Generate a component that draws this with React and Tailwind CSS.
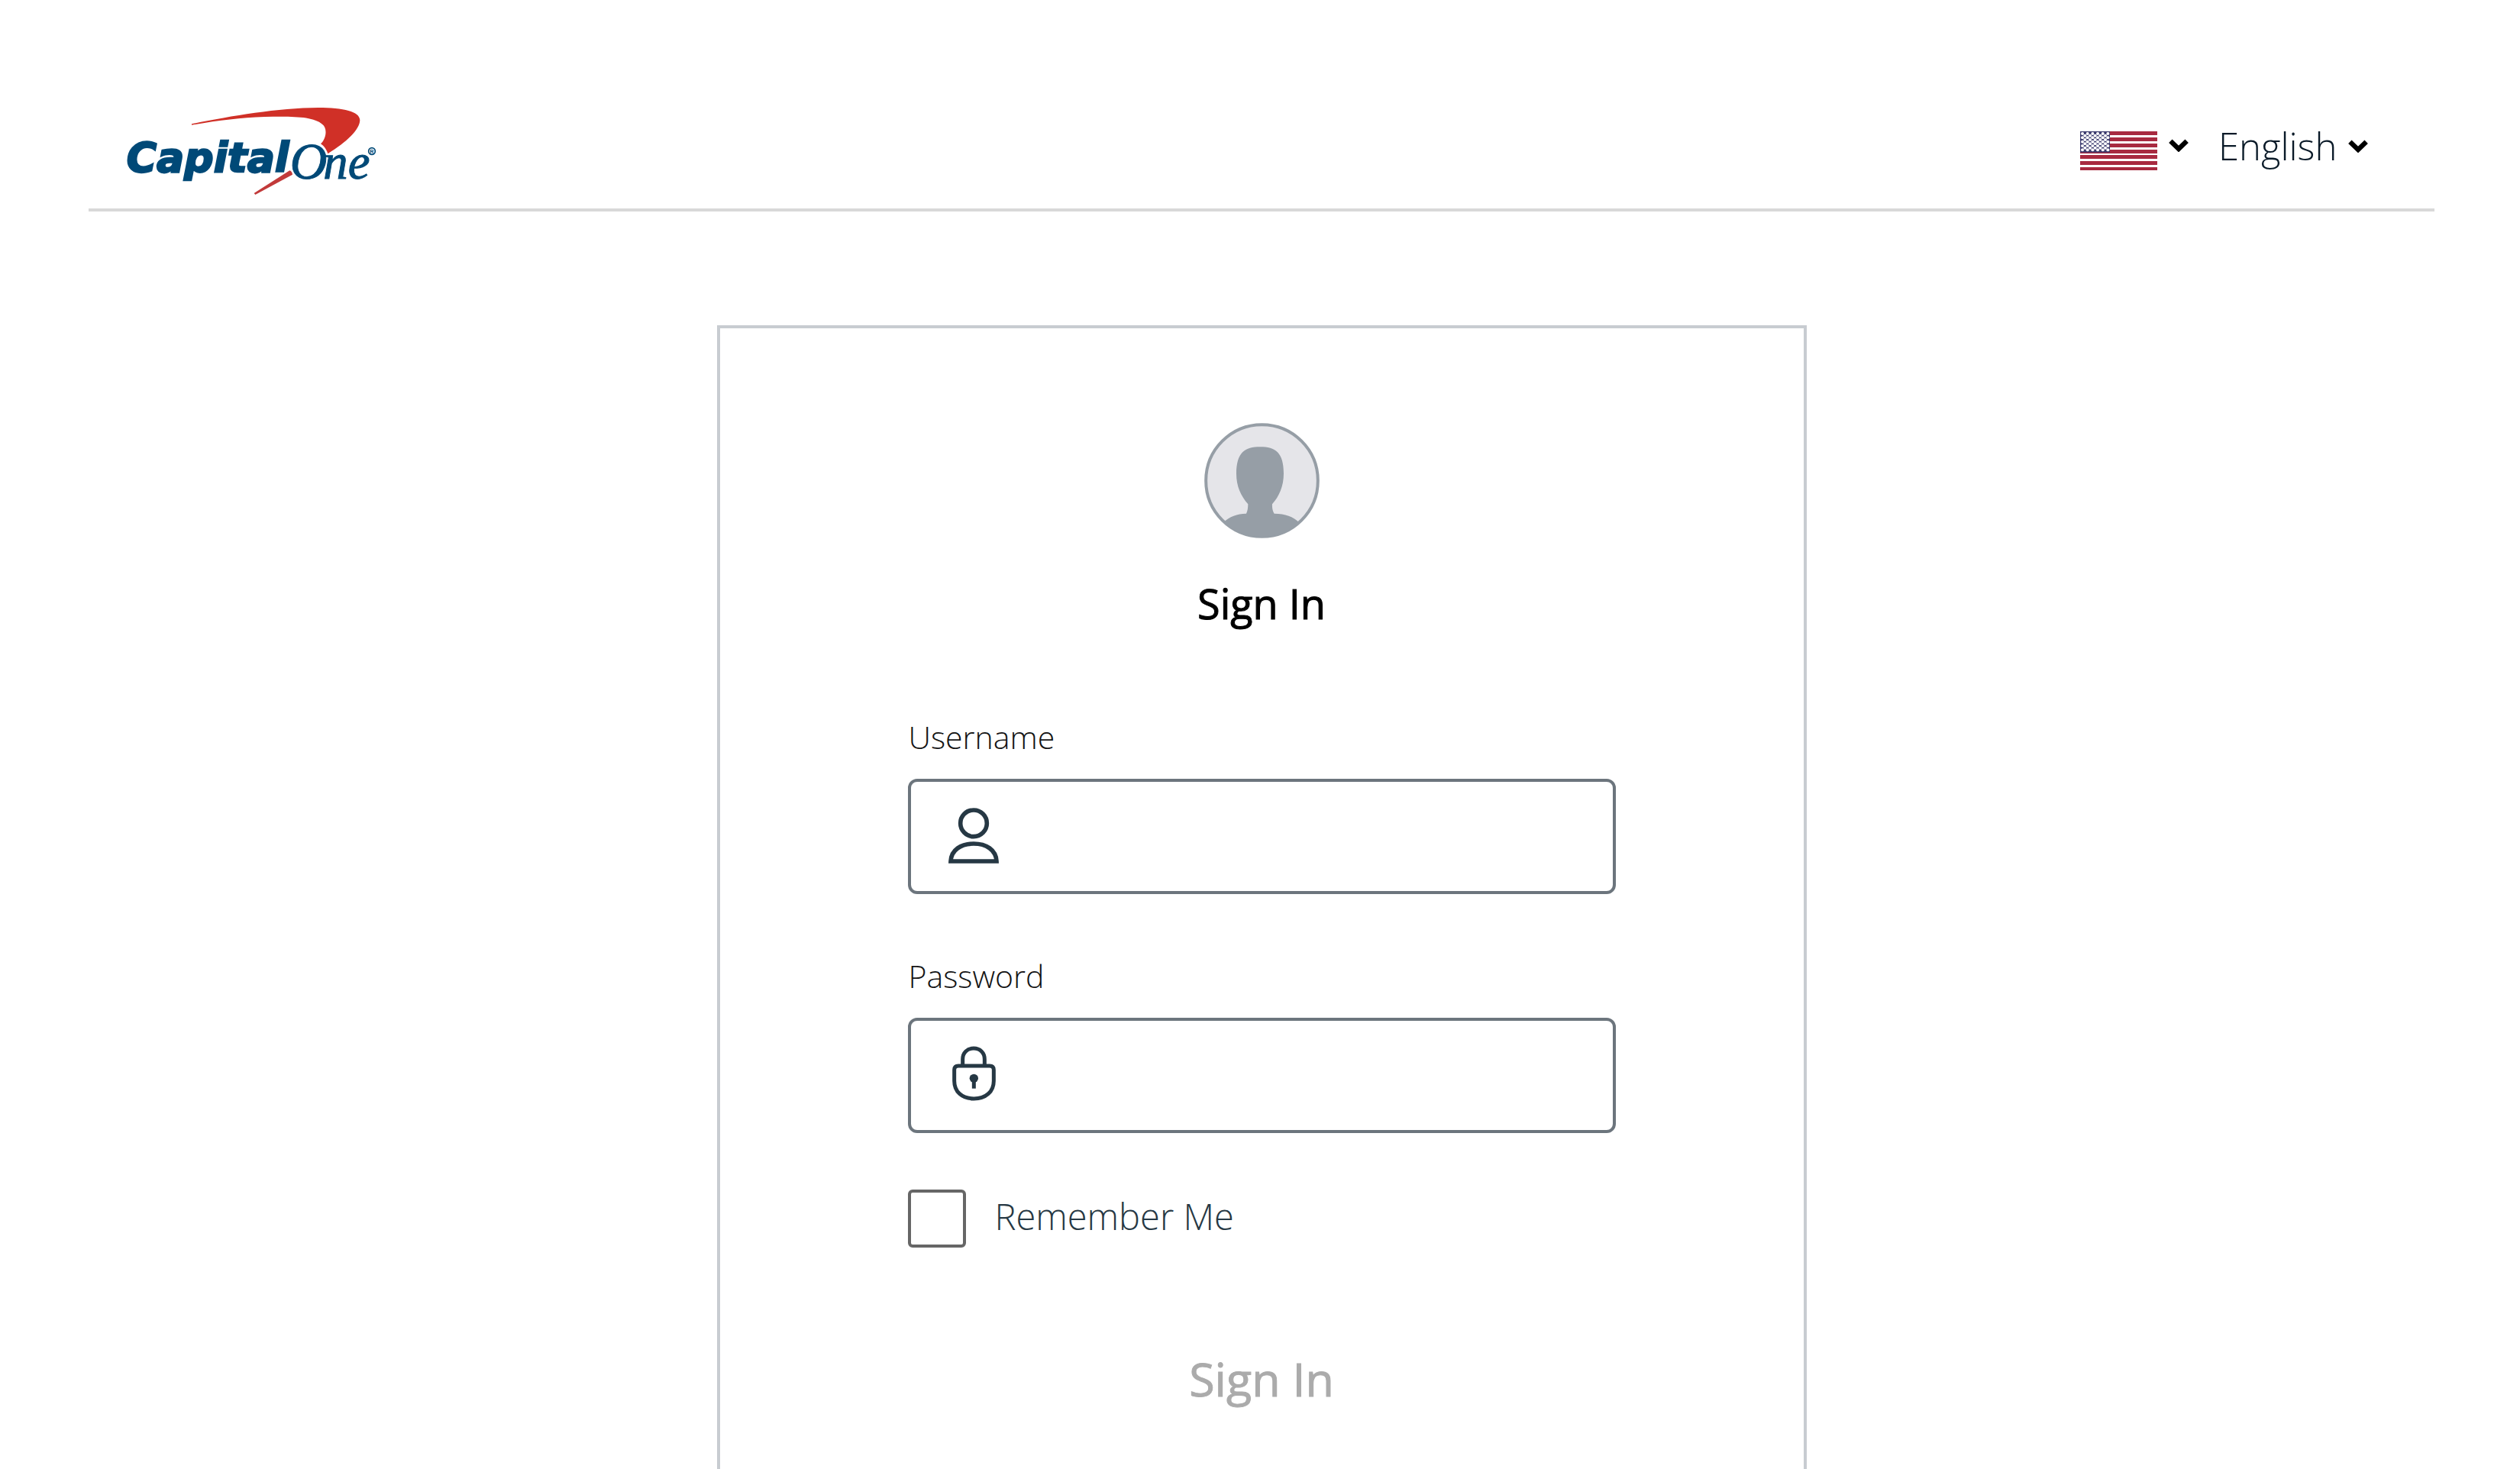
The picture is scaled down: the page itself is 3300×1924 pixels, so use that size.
import React from 'react';

function Logo() {
  return (
    <svg className="h-[116px] w-[328px]" viewBox="195 60 984 348" role="img" aria-label="Capital One">
      <path
        fill="#d03027"
        d="M453 127C600 97 790 64 950 63C1050 63 1113 78 1114 112C1113 150 1062 198 988 244C982 226 974 215 960 205C985 180 985 140 966 128C930 97 850 97 740 99C640 103 560 113 453 131Z"
      />
      <path fill="#c23a3a" d="M698 399L838 310Q848 314 849 326L703 405Z" />
      <text
        x="197"
        y="316"
        fill="#004977"
        stroke="#004977"
        strokeWidth="7"
        fontSize="161"
        fontWeight="700"
        fontStyle="italic"
        fontFamily="DejaVu Sans, sans-serif"
      >
        Capital
      </text>
      <text fill="#004977" stroke="#004977" strokeWidth="3" fontStyle="italic" fontFamily="Liberation Serif, serif">
        <tspan x="839" y="341" fontSize="202">O</tspan>
        <tspan x="970" y="341" fontSize="194">ne</tspan>
      </text>
      <circle cx="1161" cy="234" r="13" fill="none" stroke="#004977" strokeWidth="5" />
      <text x="1153" y="242" fill="#004977" fontSize="22" fontWeight="700" fontFamily="Liberation Sans, sans-serif">
        R
      </text>
    </svg>
  );
}

function Flag() {
  const stars = [];
  for (let row = 0; row < 9; row++) {
    const count = row % 2 ? 5 : 6;
    for (let i = 0; i < count; i++) {
      stars.push([9 + i * 20 + (row % 2 ? 10 : 0), 9 + row * 8]);
    }
  }
  return (
    <svg className="h-[51px] w-[101px]" viewBox="0 0 303 153" aria-hidden="true">
      <rect width="303" height="153" fill="#fff" />
      {[0, 24, 48, 72, 93, 117, 141].map((y) => (
        <rect key={y} y={y} width="303" height={y === 141 ? 12 : 15} fill="#a82a40" />
      ))}
      <rect width="117" height="83" fill="#3c3b6e" />
      {stars.map(([x, y]) => (
        <circle key={`${x}-${y}`} cx={x} cy={y} r="6" fill="#fff" />
      ))}
    </svg>
  );
}

function Chevron() {
  return (
    <svg className="pointer-events-none h-[17px] w-[26px]" viewBox="0 0 78 51" aria-hidden="true">
      <path d="M7 8L39 39L71 8" fill="none" stroke="#000" strokeWidth="19" />
    </svg>
  );
}

function Avatar() {
  return (
    <svg className="h-[151px] w-[151px]" viewBox="171 101 453 453" aria-hidden="true">
      <circle cx="397.5" cy="327.5" r="220" fill="#e5e5e9" stroke="#969ea6" strokeWidth="12" />
      <path
        fill="#969ea6"
        d="M391 195C450 195 483 217 483 300C483 350 465 390 438 420C437 436 440 448 446 457C490 458 520 468 543 491A226 226 0 0 1 247 491C270 468 300 458 336 457C341 448 343 435 343 420C315 388 297 350 297 300C298 217 330 195 391 195Z"
      />
    </svg>
  );
}

function UserIcon() {
  return (
    <svg className="h-[80px] w-[66px] shrink-0" viewBox="246 406 198 240" fill="none" stroke="#263844" strokeWidth="17" aria-hidden="true">
      <circle cx="345" cy="473" r="52" />
      <path d="M255 622C257 577 296 553 345 553S433 577 435 622Z" />
    </svg>
  );
}

function LockIcon() {
  return (
    <svg className="h-[80px] w-[66px] shrink-0" viewBox="246 385 198 240" fill="none" stroke="#263844" strokeWidth="15" aria-hidden="true">
      <path d="M302 464V440C302 414 320 397 345 397S388 414 388 440V464" />
      <path d="M285 466H408Q424 466 424 482V525C424 568 392 595 346 595S269 568 269 525V482Q269 466 285 466Z" />
      <circle cx="346" cy="515" r="17" fill="#263844" stroke="none" />
      <path d="M346 515V555" />
    </svg>
  );
}

function Field({ id, label, type, icon }) {
  return (
    <div className="flex flex-col gap-[27px]">
      <label htmlFor={id} className="pl-px text-[41px] leading-[56px] font-light text-[#141414]">
        {label}
      </label>
      <div className="flex h-[151px] items-center rounded-[12px] border-4 border-[#6c757d] pl-[49px]">
        {icon}
        <input id={id} type={type} className="h-full min-w-0 grow bg-transparent px-8 text-[41px] font-light outline-none" />
      </div>
    </div>
  );
}

export default function App() {
  return (
    <div className="flex min-h-screen flex-col bg-white pr-[112px] pl-[116px] font-['Open_Sans',sans-serif]">
      <header className="flex items-start justify-between border-b-4 border-[#d8d8d8] pt-[140px] pr-[87px] pb-[17px] pl-[49px]">
        <a href="#home">
          <Logo />
        </a>
        <div className="flex items-start gap-[39px] pt-[17px]">
          <button type="button" aria-label="Country: United States" className="flex items-start gap-[15px] pt-[15px]">
            <Flag />
            <span className="pt-[10px]">
              <Chevron />
            </span>
          </button>
          <div className="flex items-center">
            <select
              aria-label="Language"
              className="-mr-[26px] appearance-none bg-transparent pr-[40px] text-[49px] leading-[68px] font-light text-[#0a1a28] outline-none"
            >
              <option>English</option>
            </select>
            <Chevron />
          </div>
        </div>
      </header>

      <main className="mt-[149px] flex grow justify-center">
        <form className="flex w-[1427px] flex-col border-4 border-b-0 border-[#c8ccd1] px-[246px] pt-[124px]">
          <div className="flex flex-col items-center gap-[49px]">
            <Avatar />
            <h1 className="text-[54px] leading-[72px] text-black [-webkit-text-stroke:1px]">Sign In</h1>
          </div>
          <div className="mt-[111px] flex flex-col gap-[79px]">
            <Field id="username" label="Username" type="text" icon={<UserIcon />} />
            <Field id="password" label="Password" type="password" icon={<LockIcon />} />
          </div>
          <div className="mt-[74px] flex items-start gap-[38px]">
            <input
              id="remember"
              type="checkbox"
              className="h-[76px] w-[76px] appearance-none rounded-[6px] border-4 border-[#666666] checked:bg-[#666666]"
            />
            <label htmlFor="remember" className="text-[47px] leading-[70px] font-light text-[#263844]">
              Remember Me
            </label>
          </div>
          <button
            type="submit"
            disabled
            className="mt-[130px] self-center text-[61px] leading-[84px] text-[#ababab] [-webkit-text-stroke:1px]"
          >
            Sign In
          </button>
        </form>
      </main>
    </div>
  );
}
